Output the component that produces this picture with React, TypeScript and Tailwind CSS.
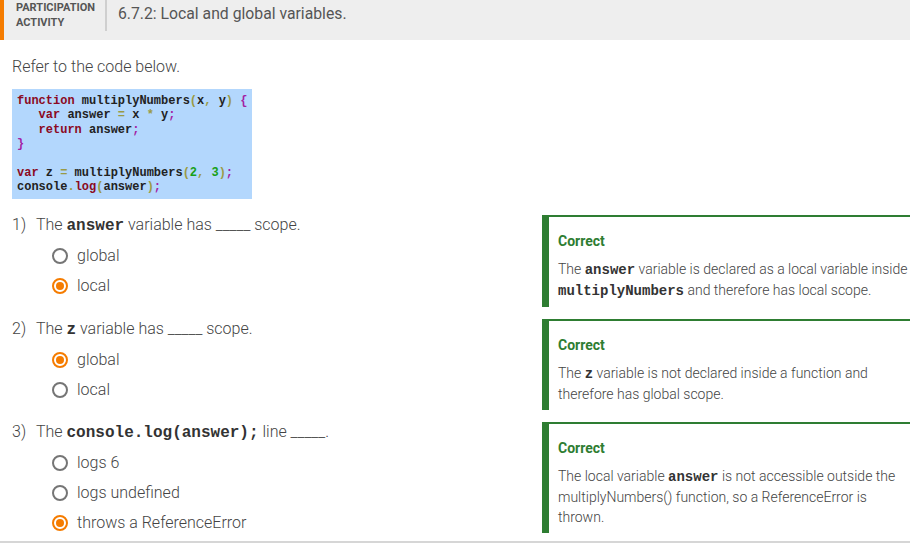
import React from "react";

const kw = "text-[#8b0a23]";
const pun = "text-[#9a9a45]";
const brk = "text-[#a321a3]";
const num = "text-[#18a018]";

function Radio({ checked }: { checked: boolean }) {
  return checked ? (
    <span className="w-4 h-4 rounded-full border-2 border-[#f57c00] flex items-center justify-center shrink-0">
      <span className="w-2 h-2 rounded-full bg-[#f57c00]" />
    </span>
  ) : (
    <span className="w-4 h-4 rounded-full border-2 border-[#757575] shrink-0" />
  );
}

function Option({ label, checked }: { label: string; checked: boolean }) {
  return (
    <div className="h-[30px] flex items-center ml-[40px] gap-[9px]">
      <Radio checked={checked} />
      <span className="text-[16px] font-light text-[#444]">{label}</span>
    </div>
  );
}

function Code({ children }: { children: React.ReactNode }) {
  return (
    <span className="font-['Liberation_Mono',monospace] font-bold text-[#333]">
      {children}
    </span>
  );
}

function Card({ children }: { children: React.ReactNode }) {
  return (
    <div className="self-start w-[368px] bg-white border-l-[7px] border-t-2 border-[#2e7d32] pl-[9px] pt-[14px]">
      <div className="text-[14px] leading-[20px] font-bold text-[#2e7d32]">Correct</div>
      <div className="mt-[8px] text-[14px] leading-[20px] font-light text-[#444] whitespace-nowrap pb-[6px]">
        {children}
      </div>
    </div>
  );
}

function Question({
  n,
  text,
  options,
  card,
}: {
  n: string;
  text: React.ReactNode;
  options: { label: string; checked: boolean }[];
  card: React.ReactNode;
}) {
  return (
    <div className="flex">
      <div className="w-[542px] pl-[12px] shrink-0">
        <div className="flex text-[16px] leading-[20px] font-light text-[#444]">
          <span className="w-[24px]">{n}</span>
          <span>{text}</span>
        </div>
        <div className="mt-[5px]">
          {options.map((o) => (
            <Option key={o.label} label={o.label} checked={o.checked} />
          ))}
        </div>
      </div>
      <Card>{card}</Card>
    </div>
  );
}

export default function App() {
  return (
    <div className="w-[910px] h-[547px] overflow-hidden bg-white font-['Roboto',sans-serif]">
      <div className="flex bg-[#eeeeee] h-[40px]">
        <div className="w-[4px] bg-[#f57c00]" />
        <div className="pl-[12px] w-[103px] h-[31px] border-r-2 border-[#cfcfcf] text-[11px] leading-[15px] font-bold text-[#555] flex flex-col justify-start">
          <span>PARTICIPATION</span>
          <span>ACTIVITY</span>
        </div>
        <div className="pl-[11px] pt-[4px] text-[15.75px] leading-[20px] text-[#555]">
          6.7.2: Local and global variables.
        </div>
      </div>

      <div className="pl-[12px] mt-[17px] text-[16px] leading-[20px] font-light text-[#444]">
        Refer to the code below.
      </div>

      <div className="pl-[12px] mt-[12px]">
        <pre className="w-fit bg-[#b3d7fd] pl-[5px] pr-[5px] pt-[5px] pb-[4px] font-['Liberation_Mono',monospace] font-bold text-[12px] leading-[14.4px] text-[#222]">
          <span className={kw}>function</span> multiplyNumbers<span className={pun}>(</span>x<span className={pun}>,</span> y<span className={pun}>)</span> <span className={brk}>{"{"}</span>
          {"\n   "}
          <span className={kw}>var</span> answer <span className={pun}>=</span> x <span className={pun}>*</span> y<span className={brk}>;</span>
          {"\n   "}
          <span className={kw}>return</span> answer<span className={brk}>;</span>
          {"\n"}
          <span className={brk}>{"}"}</span>
          {"\n\n"}
          <span className={kw}>var</span> z <span className={pun}>=</span> multiplyNumbers<span className={pun}>(</span><span className={num}>2</span><span className={pun}>,</span> <span className={num}>3</span><span className={pun}>)</span><span className={brk}>;</span>
          {"\n"}
          console<span className={pun}>.</span><span className={kw}>log</span><span className={pun}>(</span>answer<span className={pun}>)</span><span className={brk}>;</span>
        </pre>
      </div>

      <div className="mt-[16px] flex flex-col gap-[12px]">
        <Question
          n="1)"
          text={
            <>
              The <Code>answer</Code> variable has _____ scope.
            </>
          }
          options={[
            { label: "global", checked: false },
            { label: "local", checked: true },
          ]}
          card={
            <>
              The <Code>answer</Code> variable is declared as a local variable inside
              <br />
              <Code>multiplyNumbers</Code> and therefore has local scope.
            </>
          }
        />
        <Question
          n="2)"
          text={
            <>
              The <Code>z</Code> variable has _____ scope.
            </>
          }
          options={[
            { label: "global", checked: true },
            { label: "local", checked: false },
          ]}
          card={
            <>
              The <Code>z</Code> variable is not declared inside a function and
              <br />
              therefore has global scope.
            </>
          }
        />
        <Question
          n="3)"
          text={
            <>
              The <Code>console.log(answer);</Code> line _____.
            </>
          }
          options={[
            { label: "logs 6", checked: false },
            { label: "logs undefined", checked: false },
            { label: "throws a ReferenceError", checked: true },
          ]}
          card={
            <>
              The local variable <Code>answer</Code> is not accessible outside the
              <br />
              multiplyNumbers() function, so a ReferenceError is
              <br />
              thrown.
            </>
          }
        />
      </div>
      <div className="mt-[3px] h-[2px] bg-[#d6d6d6]" />
    </div>
  );
}
